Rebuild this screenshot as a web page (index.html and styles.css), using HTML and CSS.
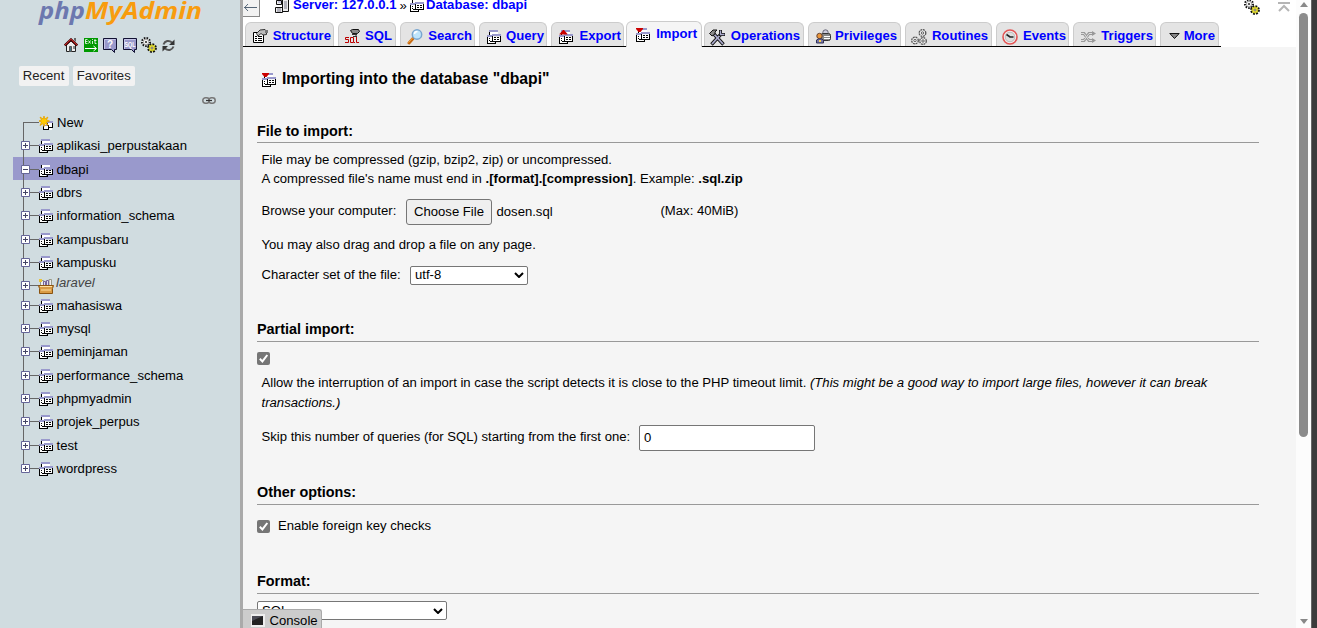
FILE: index.html
```html
<!DOCTYPE html>
<html lang="en">
<head>
<meta charset="utf-8">
<title>phpMyAdmin - Import</title>
<link rel="stylesheet" href="styles.css">
</head>
<body>
<svg class="defs" width="0" height="0">
  <symbol id="db" viewBox="0 0 14 15">
    <g shape-rendering="crispEdges">
    <path fill="#fff" d="M2 2h9v3H2zM0 6h7v8H0zM5 7h9v5H5z"/>
    <path fill="#99c" d="M2 0h9v2H2zM0 5h5v2H0zM5 4h9v2H5z"/>
    <path fill="#000" d="M2 2h1v3H2zM0 7h1v7H0zM1 13h7v1H1zM8 12h1v2H8zM5 6h1v6H5zM13 6h1v6h-1zM6 11h7v1H6zM7 7h2v1H7zM10 7h2v1h-2zM7 9h2v1H7zM10 9h2v1h-2zM2 8h1v1H2zM2 10h1v1H2zM3 11h2v1H3z"/>
    </g>
  </symbol>
  <symbol id="newdb" viewBox="0 0 15 15">
    <path fill="#fff" d="M5 7h8v7H5z"/><path fill="#99c" d="M7 5h7v2H7zM4 9h5v1H4z"/>
    <path d="M4 10h1v4H4zM5 13h5v1H5zM9 9h1v5H9zM8 7h1v3H8zM13 7h1v5h-1zM9 11h5v1H9z"/>
    <path fill="#fc0" stroke="#e6a200" stroke-width=".8" d="M5 0l.8 3L9 1 7.400 4l3.100 1-3.100 1L9 9.500 5.800 7.500 5 10.500l-.8-3L1 9.500 2.600 6-.5 5l3.100-1L1 1l3.200 2z"/>
  </symbol>
  <symbol id="server" viewBox="0 0 14 14">
    <path fill="#eee" stroke="#111" d="M7.500.5h6v12h-6zM1.500 1.500h5v4h-5zM.5 8.500h7v5h-7z"/>
    <path stroke="#778" d="M9 3h3M9 5h3M9 7h3M9 9h3M2 10h4M2 12h4"/><path stroke="#99c" d="M3 3h3"/>
  </symbol>
  <symbol id="import" viewBox="0 0 14 15"><use href="#db" width="14" height="15"/><path fill="#c00" d="M0 0h7v1L4.500 4h-2L0 1z"/></symbol>
  <symbol id="export" viewBox="0 0 14 15"><use href="#db" width="14" height="15"/><path fill="#c00" d="M4 0h1l3.500 4v.5h-8V4z"/></symbol>
  <symbol id="home" viewBox="0 0 14 14">
    <path fill="#eee" stroke="#222" d="M2.500 7v6.500h9V7L7 3z"/><path fill="none" stroke="#400" stroke-width="2.400" d="M.8 7.500L7 1.500l6.200 6"/><path fill="none" stroke="#d33" stroke-width="1" d="M1 7.200l6-6 6 6"/><path fill="#666" d="M10 0h2v4l-2-2z"/><path fill="#478" stroke="#555" d="M5.500 8.500h2v5h-2z"/><path fill="#888" d="M9 8h2v3H9z"/>
  </symbol>
  <symbol id="exit" viewBox="0 0 14 14"><path fill="#090" d="M0 0h14v14H0z"/><path fill="none" stroke="#fff" stroke-width=".8" d="M3.500 1.500h-2v4h2M1.500 3.500h2M4.500 2.500l2 3M6.500 2.500l-2 3M8.500 3v3M8.500 1v1M11 1v4.500h1.500M10 2.500h2.500"/><path fill="none" stroke="#fff" d="M1 10.500h11M9.500 8l3 2.500-3 2.500"/></symbol>
  <symbol id="bubble" viewBox="0 0 15 15"><path fill="#99c" stroke="#113" d="M.5.5h13v11h-2v3l-3-3h-8z"/><path fill="none" stroke="#c6c6e8" d="M1.500 11V1.500h11"/></symbol>
  <symbol id="gears" viewBox="0 0 16 16">
    <circle cx="5" cy="5" r="3.700" fill="#fff" stroke="#111" stroke-width="2.600" stroke-dasharray="1.400 1.100"/><circle cx="5" cy="5" r="2.800" fill="#f4f4f4" stroke="#999" stroke-width=".8"/><circle cx="5" cy="5" r="1.100" fill="#333"/>
    <circle cx="11" cy="11" r="3.700" fill="#ee3" stroke="#111" stroke-width="2.400" stroke-dasharray="1.700 1.200"/><circle cx="11" cy="11" r="2.800" fill="#ffef40" stroke="#bb2" stroke-width=".8"/><circle cx="11" cy="11" r="1.100" fill="#fff" stroke="#333" stroke-width=".7"/>
  </symbol>
  <symbol id="reload" viewBox="0 0 13 13"><path fill="none" stroke="#555" stroke-width="2" d="M1.500 5.500C3 1.500 7 1 10 3.500M11.500 7.500C10 11.500 6 12 3 9.500"/><path fill="#333" d="M12.500.5V6H7zM.5 12.500V7H6z"/></symbol>
  <symbol id="link" viewBox="0 0 14 7"><rect x=".8" y=".8" width="6.500" height="5.400" rx="2.700" fill="none" stroke="#777" stroke-width="1.500"/><rect x="6.700" y=".8" width="6.500" height="5.400" rx="2.700" fill="none" stroke="#777" stroke-width="1.500"/><path stroke="#333" stroke-width="1.200" d="M4 3.500h6"/></symbol>
  <symbol id="basket" viewBox="0 0 16 16"><path fill="#eee" stroke="#998" d="M2.500 2.500h3V9h-3zM11 1.500h2.500V9H11z"/><path fill="#dde" stroke="#769" d="M5.500 3.500h2V9h-2zM8.500 2.500h2V9h-2z"/><path fill="#e8c43c" d="M1 1h3v3H1z"/><path fill="#d99b45" stroke="#8a5310" d="M.5 7.500h15l-1 3v5h-13v-5z"/><path stroke="#ffe0a0" d="M2 8.500h12M3 12h10"/></symbol>
  <symbol id="plus" viewBox="0 0 9 9"><path fill="#fff" stroke="#669" d="M.5.5h8v8h-8z"/><path stroke="#446" d="M2 4.500h5M4.500 2v5"/></symbol>
  <symbol id="minus" viewBox="0 0 9 9"><path fill="#fff" stroke="#669" d="M.5.5h8v8h-8z"/><path stroke="#446" d="M2 4.500h5"/></symbol>
  <symbol id="props" viewBox="0 0 15 15"><path fill="#fff" stroke="#000" d="M.5 3.500h10v10H.5z"/><path stroke="#000" d="M2 7.500h2M5 7.500h4M2 9.500h2M5 9.500h4M2 11.500h2M5 11.500h4"/><path fill="#bbb" stroke="#333" d="M3.500 4.500L7 1l5-.5 1.500 2v3L10 6 8 4.500 5 7z"/><path fill="#777" d="M12 1h3v3h-3z"/></symbol>
  <symbol id="sqltab" viewBox="0 0 15 15"><path fill="#888" stroke="#111" d="M5.500 1.500l2-1h6l1 2-2 2h-5z"/><path fill="none" stroke="#333" d="M7 5.500h5M8 7.500h4M11 4v4"/><path fill="none" stroke="#b00" d="M4 8.500H.500v2h3v3H0M5.500 8.500h3v5h-3zM8 12l2 2M11.500 8v5.500H14"/></symbol>
  <symbol id="search" viewBox="0 0 16 16"><path stroke="#c76a13" stroke-width="3" stroke-linecap="round" d="M2 14l4-4.500"/><path stroke="#f7a940" stroke-width="1" d="M1.500 13.500l4-4.500"/><circle cx="10" cy="5.500" r="4.700" fill="#bfe5fc" stroke="#7aa6cf" stroke-width="1.500"/><path fill="none" stroke="#fff" stroke-width="1.500" d="M7.500 5c0-2 1.500-2.500 3-2.500"/></symbol>
  <symbol id="tools" viewBox="0 0 17 17"><path stroke="#111" stroke-width="3.400" d="M4 4l10.500 11.500M2.500 15.500L13 4"/><path stroke="#aac" stroke-width="1.800" d="M4 4l10 11M3 15L13 4"/><path fill="#888" stroke="#111" d="M.5 4.500L4 1h4L6 3v2L3 7z"/><path fill="none" stroke="#111" stroke-width="3" d="M11.500 1v4.500H16"/><path fill="none" stroke="#aac" stroke-width="1.300" d="M11.500 1.500v4h4"/></symbol>
  <symbol id="users" viewBox="0 0 15 15"><circle cx="9.500" cy="3.500" r="2.700" fill="#ccd" stroke="#667"/><rect x="5" y="4.500" width="9.500" height="7" rx="2" fill="#888" stroke="#333"/><path stroke="#fff" d="M8 7.500h6M8 9.500h6"/><circle cx="3.500" cy="7" r="2.700" fill="#ea963a" stroke="#643"/><path fill="#77a" stroke="#335" d="M.5 14v-3l2-1h3l2 1v3z"/><path fill="#ffd24a" d="M3 11h2v2H3z"/></symbol>
  <symbol id="routine" viewBox="0 0 16 16"><g fill="#eee" stroke="#555" stroke-width="1.300"><circle cx="11.500" cy="4" r="3.300" stroke-dasharray="1.900 .7"/><circle cx="4" cy="11.500" r="3.300" stroke-dasharray="1.900 .7"/><circle cx="12" cy="12" r="3.300" stroke-dasharray="1.900 .7"/></g><g fill="none" stroke="#555" stroke-width=".9"><circle cx="11.500" cy="4" r="1.200"/><circle cx="4" cy="11.500" r="1.200"/><circle cx="12" cy="12" r="1.200"/></g></symbol>
  <symbol id="clock" viewBox="0 0 16 16"><circle cx="8" cy="8" r="7" fill="#f2eeee" stroke="#e35555" stroke-width="1.600"/><circle cx="8" cy="8" r="4.800" fill="#ddd" stroke="#bbb"/><path fill="none" stroke="#222" stroke-width="1.600" d="M4.500 5.500L8 8h3.500"/></symbol>
  <symbol id="trigger" viewBox="0 0 15 12"><path fill="none" stroke="#999" stroke-width="3" d="M0 2.500h3l5 7h5M0 9.500h3l5-7h5"/><path fill="none" stroke="#ddd" stroke-width="1" d="M0 2.500h3l5 7h5M0 9.500h3l5-7h5"/><path fill="#999" d="M11 0l4 2.500L11 5zM11 7l4 2.500-4 2.500z"/></symbol>
  <symbol id="more" viewBox="0 0 11 7"><path fill="#888" stroke="#111" d="M.8.5h9.400L5.500 5.500z"/></symbol>
</svg>

<div class="app">
  <aside class="nav">
    <svg class="logo" width="170" height="26"><text x="1" y="19" textLength="46" lengthAdjust="spacingAndGlyphs" class="php">php</text><text x="47" y="19" textLength="117" lengthAdjust="spacingAndGlyphs" class="mya">MyAdmin</text></svg>
    <div class="navicons">
      <svg class="i-home" width="14" height="14"><use href="#home"/></svg>
      <svg width="14" height="14"><use href="#exit"/></svg>
      <svg width="15" height="15"><use href="#bubble"/><text x="4" y="9.500" class="ico-q">?</text></svg>
      <svg width="15" height="15"><use href="#bubble"/><text x="1.500" y="8.500" class="ico-sql" textLength="11" lengthAdjust="spacingAndGlyphs">SQL</text></svg>
      <svg class="i-gears" width="16" height="16"><use href="#gears"/></svg>
      <svg width="13" height="13"><use href="#reload"/></svg>
    </div>
    <div class="quick"><span>Recent</span><span>Favorites</span></div>
    <div class="linkrow"><svg width="14" height="7"><use href="#link"/></svg></div>
    <ul class="tree">
      <li class="first"><i class="exp"></i><svg class="db" width="15" height="15"><use href="#newdb"/></svg><span>New</span></li>
      <li class="tall"><svg class="exp" width="9" height="9"><use href="#plus"/></svg><svg class="db" width="14" height="15"><use href="#db"/></svg><span>aplikasi_perpustakaan</span></li>
      <li class="selected"><svg class="exp" width="9" height="9"><use href="#minus"/></svg><svg class="db" width="14" height="15"><use href="#db"/></svg><span>dbapi</span></li>
      <li><svg class="exp" width="9" height="9"><use href="#plus"/></svg><svg class="db" width="14" height="15"><use href="#db"/></svg><span>dbrs</span></li>
      <li class="tall"><svg class="exp" width="9" height="9"><use href="#plus"/></svg><svg class="db" width="14" height="15"><use href="#db"/></svg><span>information_schema</span></li>
      <li><svg class="exp" width="9" height="9"><use href="#plus"/></svg><svg class="db" width="14" height="15"><use href="#db"/></svg><span>kampusbaru</span></li>
      <li><svg class="exp" width="9" height="9"><use href="#plus"/></svg><svg class="db" width="14" height="15"><use href="#db"/></svg><span>kampusku</span></li>
      <li class="fav"><svg class="exp" width="9" height="9"><use href="#plus"/></svg><svg class="basket" width="16" height="16"><use href="#basket"/></svg><span>laravel</span></li>
      <li><svg class="exp" width="9" height="9"><use href="#plus"/></svg><svg class="db" width="14" height="15"><use href="#db"/></svg><span>mahasiswa</span></li>
      <li><svg class="exp" width="9" height="9"><use href="#plus"/></svg><svg class="db" width="14" height="15"><use href="#db"/></svg><span>mysql</span></li>
      <li class="tall"><svg class="exp" width="9" height="9"><use href="#plus"/></svg><svg class="db" width="14" height="15"><use href="#db"/></svg><span>peminjaman</span></li>
      <li><svg class="exp" width="9" height="9"><use href="#plus"/></svg><svg class="db" width="14" height="15"><use href="#db"/></svg><span>performance_schema</span></li>
      <li><svg class="exp" width="9" height="9"><use href="#plus"/></svg><svg class="db" width="14" height="15"><use href="#db"/></svg><span>phpmyadmin</span></li>
      <li class="tall"><svg class="exp" width="9" height="9"><use href="#plus"/></svg><svg class="db" width="14" height="15"><use href="#db"/></svg><span>projek_perpus</span></li>
      <li><svg class="exp" width="9" height="9"><use href="#plus"/></svg><svg class="db" width="14" height="15"><use href="#db"/></svg><span>test</span></li>
      <li class="last"><svg class="exp" width="9" height="9"><use href="#plus"/></svg><svg class="db" width="14" height="15"><use href="#db"/></svg><span>wordpress</span></li>
    </ul>
  </aside>
  <div class="resizer"></div>
  <main class="main">
    <header class="crumbs">
      <div class="collapse"><svg width="13" height="9" viewBox="0 0 13 9"><path fill="none" stroke="#567" d="M0 4.500h13M4 1L.7 4.500 4 8"/></svg></div>
      <svg class="srv" width="14" height="14"><use href="#server"/></svg>
      <a class="c-server">Server: 127.0.0.1</a><span class="sep">»</span>
      <svg class="cdb" width="14" height="15"><use href="#db"/></svg>
      <a class="c-db">Database: dbapi</a>
      <svg class="cgear" width="16" height="16"><use href="#gears"/></svg>
      <svg class="ctop" width="12" height="10" viewBox="0 0 12 10"><path fill="none" stroke="#b5b5b5" stroke-width="2" d="M0 1h12M1 9l5-5 5 5"/></svg>
    </header>
    <nav class="tabs">
      <a class="tab t-structure"><svg width="15" height="15"><use href="#props"/></svg><span>Structure</span></a>
      <a class="tab t-sql"><svg width="15" height="15"><use href="#sqltab"/></svg><span>SQL</span></a>
      <a class="tab t-search"><svg width="16" height="16"><use href="#search"/></svg><span>Search</span></a>
      <a class="tab t-query"><svg width="14" height="15"><use href="#db"/></svg><span>Query</span></a>
      <a class="tab t-export"><svg width="14" height="15"><use href="#export"/></svg><span>Export</span></a>
      <a class="tab t-import active"><svg width="14" height="15"><use href="#import"/></svg><span>Import</span></a>
      <a class="tab t-operations"><svg width="17" height="17"><use href="#tools"/></svg><span>Operations</span></a>
      <a class="tab t-privileges"><svg width="15" height="15"><use href="#users"/></svg><span>Privileges</span></a>
      <a class="tab t-routines"><svg width="16" height="16"><use href="#routine"/></svg><span>Routines</span></a>
      <a class="tab t-events"><svg width="16" height="16"><use href="#clock"/></svg><span>Events</span></a>
      <a class="tab t-triggers"><svg width="15" height="12"><use href="#trigger"/></svg><span>Triggers</span></a>
      <a class="tab t-more"><svg width="11" height="7"><use href="#more"/></svg><span>More</span></a>
    </nav>
    <section class="page">
      <h2><svg width="14" height="15"><use href="#import"/></svg><span>Importing into the database "dbapi"</span></h2>
      <section class="group file">
        <h3>File to import:</h3>
        <p class="hint">File may be compressed (gzip, bzip2, zip) or uncompressed.<br>A compressed file's name must end in <b>.[format].[compression]</b>. Example: <b>.sql.zip</b></p>
        <div class="browse"><label>Browse your computer:</label><button type="button">Choose File</button><span class="fname">dosen.sql</span><span>(Max: 40MiB)</span></div>
        <p class="drag">You may also drag and drop a file on any page.</p>
        <div class="charset"><label>Character set of the file:</label><div class="select"><span>utf-8</span><svg width="10" height="6" viewBox="0 0 10 6"><path d="M1 1l4 4 4-4"/></svg></div></div>
      </section>
      <section class="group partial">
        <h3>Partial import:</h3>
        <svg class="check" width="13" height="13" viewBox="0 0 13 13"><rect width="13" height="13" rx="2"/><path d="M2.800 6.800l2.600 2.600L10.300 3"/></svg>
        <p class="allow">Allow the interruption of an import in case the script detects it is close to the PHP timeout limit. <em>(This might be a good way to import large files, however it can break<br>transactions.)</em></p>
        <div class="skip"><label>Skip this number of queries (for SQL) starting from the first one:</label><div class="input">0</div></div>
      </section>
      <section class="group other">
        <h3>Other options:</h3>
        <div class="fk"><svg class="check" width="13" height="13" viewBox="0 0 13 13"><rect width="13" height="13" rx="2"/><path d="M2.800 6.800l2.600 2.600L10.300 3"/></svg><label>Enable foreign key checks</label></div>
      </section>
      <section class="group format">
        <h3>Format:</h3>
        <div class="select"><span>SQL</span><svg width="10" height="6" viewBox="0 0 10 6"><path d="M1 1l4 4 4-4"/></svg></div>
      </section>
    </section>
    <div class="console"><i><svg width="11" height="9"><path fill="#222" d="M0 0h11v9H0z"/><path fill="#667" d="M0 0h11L0 5z" opacity=".6"/></svg></i><span>Console</span></div>
  </main>
  <div class="scroll"><i class="up"></i><div class="thumb"></div><i class="down"></i></div>
  <div class="edge"></div>
</div>
</body>
</html>
```
FILE: styles.css
```css
* { box-sizing: border-box; }
body { margin: 0; overflow: hidden; background: #f5f5f5; color: #000; font: 13.12px/19.7px "Liberation Sans", Arial, sans-serif; }
svg { display: block; flex: none; }
.defs { position: absolute; }
h2, h3, p, ul { margin: 0; padding: 0; }
.app { display: flex; width: 1317px; height: 628px; }

.nav { width: 240px; background: #d0dce0; }
.logo { margin-left: 38px; font: italic bold 24px "Open Sans", sans-serif; }
.php { fill: #6c78af; }
.mya { fill: #f89c0e; }
.navicons { display: flex; align-items: center; gap: 5px; height: 18px; margin: 10px 0 0 64px; }
.i-home { margin-right: 1px; }
.i-gears { margin-left: -2px; }
.ico-q { font: bold 10px "Liberation Sans", sans-serif; fill: #fff; }
.ico-sql { font: bold 7px "Liberation Sans", sans-serif; fill: #fff; }
.quick { display: flex; gap: 4px; margin: 12px 0 0 18.500px; }
.quick span { height: 20px; padding: 0 4.250px; border-radius: 2px; background: #f2f2f2; color: #222; line-height: 20px; }
.linkrow { display: flex; height: 24px; padding: 11px 0 0 202px; }

.tree { list-style: none; }
.tree li { position: relative; display: flex; align-items: flex-start; height: 23px; margin-left: 13px; padding-left: 8px; }
.tree li.tall { height: 24px; }
.tree li::before { content: ""; position: absolute; left: 10px; top: 0; bottom: 0; width: 1px; background: #666; }
.tree li.first::before { top: 12px; }
.tree li.last::before { bottom: 11px; }
.tree li::after { content: ""; position: absolute; left: 10px; top: 12px; width: 16px; height: 1px; background: #666; }
.tree .exp { position: relative; z-index: 1; width: 9px; margin: 8px 9px 0 0; }
.tree .db, .tree .basket { position: relative; z-index: 1; }
.tree .db { margin: 6px 3.500px 0 0; }
.tree span { margin-top: 3px; line-height: 20px; }
.tree .first .db { margin-right: 3px; }
.tree .selected { background: #99c; }
.tree li.fav { height: 20px; }
.tree .fav .basket { margin: 5px 2px 0 -1px; }
.tree .fav span { margin-top: 0; color: #444; font-style: italic; }

.resizer { width: 3px; background: #aaa; }
.main { position: relative; display: flex; flex-direction: column; width: 1053px; overflow: hidden; background: #f5f5f5; }
.crumbs { display: flex; height: 21px; background: #fff; color: #000; }
.crumbs a { color: #00f; font-weight: bold; line-height: 10px; white-space: nowrap; }
.collapse { width: 17px; height: 17px; padding: 3px 0 0 1px; border: solid #888; border-width: 0 1px 1px 0; background: #f2f2f2; }
.srv { margin: -1px 0 0 15px; }
.c-server { width: 103px; margin-left: 4px; }
.sep { width: 14px; padding-left: 3.500px; line-height: 11px; }
.cdb { margin-top: -2px; }
.c-db { width: 101px; margin-left: 2px; }
.cgear { margin: -1px 0 0 717px; }
.ctop { margin: 2px 0 0 18px; }

.tabs { display: flex; align-items: flex-end; gap: 4px; height: 26px; padding-left: 2px; background: linear-gradient(#000, #000) 0 25px / 978px 1px no-repeat #fff; }
.tab { display: flex; align-items: center; justify-content: space-between; height: 24px; margin-bottom: 1px; padding: 2px 2px 0 7px; border: solid #ccc; border-width: 1px 1px 0; border-radius: 6px 6px 0 0; background: #e4e4e4; color: #00f; font-weight: bold; }
.tab svg { margin-top: 2px; }
.tab.active { height: 26px; margin: 0 -2px; padding: 0 4px 2px 9px; background: #f5f5f5; }
.t-structure { width: 89px; }
.t-sql { width: 58px; padding-right: 3px; padding-left: 6px; }
.t-search { width: 75px; padding-left: 6px; }
.t-query { width: 68px; }
.t-export { width: 73px; }
.t-query svg, .t-export svg, .t-import svg { margin-top: 4px; }
.t-import { width: 76px; }
.t-operations { width: 100px; padding-right: 3px; padding-left: 4px; }
.t-operations svg { margin-top: 4px; }
.t-privileges { width: 93px; padding-right: 3px; }
.t-routines { width: 87px; padding-right: 3px; padding-left: 5px; }
.t-routines svg, .t-search svg { margin-top: 3px; }
.t-events { width: 73px; padding-left: 5px; }
.t-events svg, .t-triggers svg { margin-top: 3px; }
.t-triggers { width: 83px; }
.t-more { width: 59px; padding-right: 3px; padding-left: 8px; }

.page { padding: 21px 37px 0 14px; }
h2 { display: flex; align-items: center; gap: 6px; height: 22px; padding-left: 5px; font-size: 15.740px; white-space: nowrap; }
h2 svg { margin-top: 3px; }
h3 { height: 22px; margin-bottom: 7px; border-bottom: 1px solid #999; font-size: 14.400px; line-height: 18px; }
.file { margin-top: 31px; }
.file h3 { line-height: 20px; }
.hint, .browse, .drag, .charset, .allow, .skip { margin-left: 4.500px; }
.hint { height: 39.400px; line-height: 19px; }
.browse { display: flex; height: 26px; margin-top: 9.600px; }
.browse label { width: 144.500px; line-height: 24px; }
.browse button { width: 86px; height: 26px; padding: 0; border: 1px solid #767676; border-radius: 3px; background: #efefef; color: #000; font: 13.120px "Liberation Sans", sans-serif; }
.browse span { line-height: 24px; }
.browse .fname { width: 168.500px; padding-left: 4.500px; line-height: 25px; }
.drag { margin-top: 10.400px; }
.charset { display: flex; margin-top: 10.600px; }
.charset label { width: 148.500px; line-height: 18px; }
.select { display: flex; align-items: center; justify-content: space-between; width: 118px; height: 19px; padding: 0 3px 0 4px; border: 1px solid #767676; border-radius: 2px; background: #fff; }
.select path { fill: none; stroke: #000; stroke-width: 2; }
.partial { margin-top: 35px; }
.partial h3 { margin-bottom: 10px; }
.check rect { fill: #767676; }
.check path { fill: none; stroke: #fff; stroke-width: 2; }
.allow { margin-top: 8px; line-height: 20px; white-space: nowrap; }
.allow em { letter-spacing: .015px; }
.skip { display: flex; margin-top: 12.400px; }
.skip label { width: 377.500px; line-height: 24px; }
.input { width: 176px; height: 26px; padding-left: 4px; border: 1px solid #767676; border-radius: 2px; background: #fff; line-height: 24px; }
.other { margin-top: 32px; }
.fk { display: flex; align-items: center; height: 28px; gap: 8px; }
.fk .check { margin-top: 1px; }
.format { margin-top: 32px; }
.format .select { width: 190px; }

.console { position: absolute; left: 0; bottom: 0; display: flex; align-items: center; width: 79px; height: 19px; padding-left: 8px; border: solid #aaa; border-width: 1px 1px 0 0; border-radius: 0 3px 0 0; background: #ccc; }
.console i { display: flex; width: 14px; height: 13px; margin: 2px 4.500px 0 0; padding: 2px 1px; background: #eee; }
.console span { padding-top: 4px; }
.scroll { display: flex; flex-direction: column; align-items: center; width: 15px; background: #fcfcfc; }
.up, .down { border: 4.500px solid transparent; }
.up { margin-top: -2.500px; border-bottom: 5px solid #888; }
.thumb { width: 9px; height: 424px; margin-top: 6px; border-radius: 5px; background: #8b8b8b; }
.down { margin-top: auto; margin-bottom: 0; border-top: 5px solid #888; }
.edge { width: 6px; border-left: 1px solid #666; background: #3b3b3b; }
```
